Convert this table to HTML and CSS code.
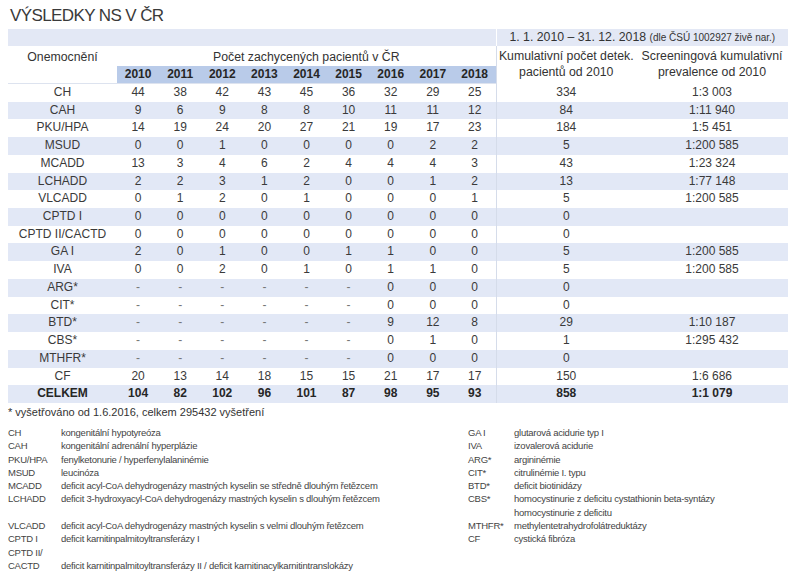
FILE: index.html
```html
<!DOCTYPE html>
<html lang="cs">
<head>
<meta charset="utf-8">
<title>Výsledky NS v ČR</title>
<link rel="stylesheet" href="styles.css">
</head>
<body>
<div class="page">
  <h1 class="title">VÝSLEDKY NS V ČR</h1>
  <table class="results">
    <colgroup>
      <col class="c-name">
      <col class="c-year"><col class="c-year"><col class="c-year"><col class="c-year"><col class="c-year"><col class="c-year"><col class="c-year"><col class="c-year"><col class="c-year">
      <col class="c-cum">
      <col class="c-prev">
    </colgroup>
    <thead>
      <tr class="band">
        <th colspan="10" class="band-left"></th>
        <th colspan="2" class="band-right">1. 1. 2010 – 31. 12. 2018 <span class="small">(dle ČSÚ 1002927 živě nar.)</span></th>
      </tr>
      <tr class="head">
        <th class="name-head">Onemocnění</th>
        <th colspan="9">Počet zachycených pacientů v ČR</th>
        <th rowspan="2" class="sep two-line">Kumulativní počet detek.<br>pacientů od 2010</th>
        <th rowspan="2" class="two-line">Screeningová kumulativní<br>prevalence od 2010</th>
      </tr>
      <tr class="years">
        <th class="blank"></th>
        <th>2010</th><th>2011</th><th>2012</th><th>2013</th><th>2014</th><th>2015</th><th>2016</th><th>2017</th><th>2018</th>
      </tr>
    </thead>
    <tbody>
      <tr><td>CH</td><td>44</td><td>38</td><td>42</td><td>43</td><td>45</td><td>36</td><td>32</td><td>29</td><td>25</td><td class="sep">334</td><td>1:3 003</td></tr>
      <tr><td>CAH</td><td>9</td><td>6</td><td>9</td><td>8</td><td>8</td><td>10</td><td>11</td><td>11</td><td>12</td><td class="sep">84</td><td>1:11 940</td></tr>
      <tr><td>PKU/HPA</td><td>14</td><td>19</td><td>24</td><td>20</td><td>27</td><td>21</td><td>19</td><td>17</td><td>23</td><td class="sep">184</td><td>1:5 451</td></tr>
      <tr><td>MSUD</td><td>0</td><td>0</td><td>1</td><td>0</td><td>0</td><td>0</td><td>0</td><td>2</td><td>2</td><td class="sep">5</td><td>1:200 585</td></tr>
      <tr><td>MCADD</td><td>13</td><td>3</td><td>4</td><td>6</td><td>2</td><td>4</td><td>4</td><td>4</td><td>3</td><td class="sep">43</td><td>1:23 324</td></tr>
      <tr><td>LCHADD</td><td>2</td><td>2</td><td>3</td><td>1</td><td>2</td><td>0</td><td>0</td><td>1</td><td>2</td><td class="sep">13</td><td>1:77 148</td></tr>
      <tr><td>VLCADD</td><td>0</td><td>1</td><td>2</td><td>0</td><td>1</td><td>0</td><td>0</td><td>0</td><td>1</td><td class="sep">5</td><td>1:200 585</td></tr>
      <tr><td>CPTD I</td><td>0</td><td>0</td><td>0</td><td>0</td><td>0</td><td>0</td><td>0</td><td>0</td><td>0</td><td class="sep">0</td><td></td></tr>
      <tr><td>CPTD II/CACTD</td><td>0</td><td>0</td><td>0</td><td>0</td><td>0</td><td>0</td><td>0</td><td>0</td><td>0</td><td class="sep">0</td><td></td></tr>
      <tr><td>GA I</td><td>2</td><td>0</td><td>1</td><td>0</td><td>0</td><td>1</td><td>1</td><td>0</td><td>0</td><td class="sep">5</td><td>1:200 585</td></tr>
      <tr><td>IVA</td><td>0</td><td>0</td><td>2</td><td>0</td><td>1</td><td>0</td><td>1</td><td>1</td><td>0</td><td class="sep">5</td><td>1:200 585</td></tr>
      <tr><td>ARG*</td><td class="na">-</td><td class="na">-</td><td class="na">-</td><td class="na">-</td><td class="na">-</td><td class="na">-</td><td>0</td><td>0</td><td>0</td><td class="sep">0</td><td></td></tr>
      <tr><td>CIT*</td><td class="na">-</td><td class="na">-</td><td class="na">-</td><td class="na">-</td><td class="na">-</td><td class="na">-</td><td>0</td><td>0</td><td>0</td><td class="sep">0</td><td></td></tr>
      <tr><td>BTD*</td><td class="na">-</td><td class="na">-</td><td class="na">-</td><td class="na">-</td><td class="na">-</td><td class="na">-</td><td>9</td><td>12</td><td>8</td><td class="sep">29</td><td>1:10 187</td></tr>
      <tr><td>CBS*</td><td class="na">-</td><td class="na">-</td><td class="na">-</td><td class="na">-</td><td class="na">-</td><td class="na">-</td><td>0</td><td>1</td><td>0</td><td class="sep">1</td><td>1:295 432</td></tr>
      <tr><td>MTHFR*</td><td class="na">-</td><td class="na">-</td><td class="na">-</td><td class="na">-</td><td class="na">-</td><td class="na">-</td><td>0</td><td>0</td><td>0</td><td class="sep">0</td><td></td></tr>
      <tr><td>CF</td><td>20</td><td>13</td><td>14</td><td>18</td><td>15</td><td>15</td><td>21</td><td>17</td><td>17</td><td class="sep">150</td><td>1:6 686</td></tr>
      <tr class="total"><td>CELKEM</td><td>104</td><td>82</td><td>102</td><td>96</td><td>101</td><td>87</td><td>98</td><td>95</td><td>93</td><td class="sep">858</td><td>1:1 079</td></tr>
    </tbody>
  </table>
  <p class="note">* vyšetřováno od 1.6.2016, celkem 295432 vyšetření</p>
  <div class="legend">
    <dl class="legend-col legend-left">
      <dt>CH</dt><dd>kongenitální hypotyreóza</dd>
      <dt>CAH</dt><dd>kongenitální adrenální hyperplázie</dd>
      <dt>PKU/HPA</dt><dd>fenylketonurie / hyperfenylalaninémie</dd>
      <dt>MSUD</dt><dd>leucinóza</dd>
      <dt>MCADD</dt><dd>deficit acyl-CoA dehydrogenázy mastných kyselin se středně dlouhým řetězcem</dd>
      <dt>LCHADD</dt><dd>deficit 3-hydroxyacyl-CoA dehydrogenázy mastných kyselin s dlouhým řetězcem</dd>
      <dt class="gap"></dt><dd class="gap"></dd>
      <dt>VLCADD</dt><dd>deficit acyl-CoA dehydrogenázy mastných kyselin s velmi dlouhým řetězcem</dd>
      <dt>CPTD I</dt><dd>deficit karnitinpalmitoyltransferázy I</dd>
      <dt>CPTD II/</dt><dd></dd>
      <dt>CACTD</dt><dd>deficit karnitinpalmitoyltransferázy II / deficit karnitinacylkarnitintranslokázy</dd>
    </dl>
    <dl class="legend-col legend-right">
      <dt>GA I</dt><dd>glutarová acidurie typ I</dd>
      <dt>IVA</dt><dd>izovalerová acidurie</dd>
      <dt>ARG*</dt><dd>argininémie</dd>
      <dt>CIT*</dt><dd>citrulinémie I. typu</dd>
      <dt>BTD*</dt><dd>deficit biotinidázy</dd>
      <dt>CBS*</dt><dd>homocystinurie z deficitu cystathionin beta-syntázy</dd>
      <dt></dt><dd>homocystinurie z deficitu</dd>
      <dt>MTHFR*</dt><dd>methylentetrahydrofolátreduktázy</dd>
      <dt>CF</dt><dd>cystická fibróza</dd>
    </dl>
  </div>
</div>
</body>
</html>
```

FILE: styles.css
```css
html, body {
  margin: 0;
  padding: 0;
  background: #ffffff;
}

body {
  font-family: "Liberation Sans", Arial, sans-serif;
  color: #333333;
}

.page {
  width: 780px;
  padding: 0 8px;
}

.title {
  margin: 0;
  padding: 6px 0 0 2px;
  height: 23px;
  font-size: 17px;
  line-height: 20px;
  font-weight: normal;
  letter-spacing: -0.6px;
  color: #3a3a3a;
}

.results {
  width: 780px;
  table-layout: fixed;
  border-collapse: collapse;
  border-spacing: 0;
  font-size: 12px;
}

.c-name { width: 109px; }
.c-year { width: 42.11px; }
.c-cum { width: 140px; }
.c-prev { width: 152px; }

.results th,
.results td {
  padding: 0;
  text-align: center;
  white-space: nowrap;
  font-weight: normal;
  overflow: hidden;
}

.band th {
  height: 17px;
  background: #e3e8f5;
  line-height: 17px;
}

.band-right {
  border-left: 1px solid #ffffff;
  color: #333333;
  font-size: 12.3px;
}

.small {
  font-size: 10px;
}

.head th {
  height: 18px;
  line-height: 18px;
  padding-top: 2px;
  color: #333333;
  font-size: 12.3px;
}

.results .two-line {
  line-height: 16px;
  vertical-align: top;
  font-size: 12.3px;
}

.years th {
  height: 17px;
  line-height: 17px;
  background: #b9cbe9;
  font-weight: bold;
  color: #262626;
  border-bottom: 1px solid #dde3ef;
}

.years th.blank {
  background: #ffffff;
}

.results tbody td {
  height: 17.72px;
  line-height: 17.72px;
  color: #3a3a3a;
}

.results tbody tr:nth-child(even) td {
  background: #e2e8f6;
}

.results .sep {
  border-left: 1px solid #d5dcea;
}

.results td.na {
  color: #777777;
}

.results tr.total td {
  font-weight: bold;
  color: #262626;
}

.note {
  margin: 0;
  height: 14px;
  line-height: 14px;
  padding-top: 2px;
  font-size: 11px;
  color: #333333;
}

.legend {
  display: flex;
  align-items: flex-start;
  margin-top: 7px;
  font-size: 9.5px;
  letter-spacing: -0.25px;
  color: #444444;
}

.legend-col {
  display: grid;
  align-content: start;
  margin: 0;
  line-height: 13.3px;
}

.legend-left {
  width: 460px;
  grid-template-columns: 53px 1fr;
}

.legend-right {
  grid-template-columns: 46px 1fr;
}

.legend-col dt,
.legend-col dd {
  margin: 0;
  height: 13.3px;
  white-space: nowrap;
}
```
